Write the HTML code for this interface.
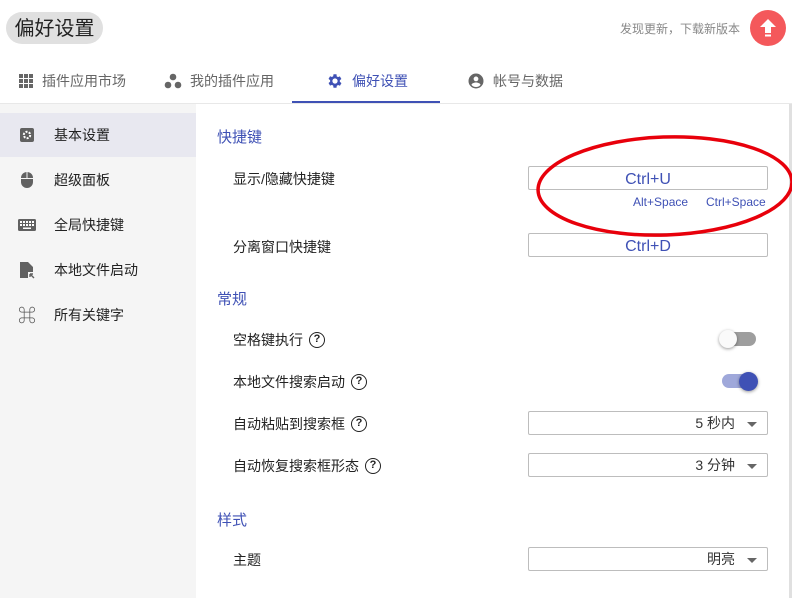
<!DOCTYPE html>
<html><head><meta charset="utf-8"><style>
*{margin:0;padding:0;box-sizing:border-box}
body{width:792px;height:598px;overflow:hidden;background:#fff;font-family:"Liberation Sans","Noto Sans CJK SC",sans-serif;position:relative;color:#212121}
.abs{position:absolute}
.pill{left:6px;top:12px;width:97px;height:32px;border-radius:16px;background:#e0e0e0;font-size:20px;line-height:34px;text-align:center;color:#222}
.tab{top:70px;font-size:14px;color:#666;line-height:22px;display:flex;align-items:center;gap:8px}
.side{left:0;top:104px;width:196px;height:494px;background:#f5f5f5}
.si{position:absolute;left:0;width:196px;height:44px;display:flex;align-items:center;font-size:14px;color:#222}
.si .ic{width:54px;display:flex;justify-content:center;color:#616161}
.h{left:217px;font-size:15px;color:#3f51b5}
.lab{left:233px;font-size:14px;color:#222;display:flex;align-items:center;gap:6px}
.q{width:16px;height:16px;border:1.4px solid #222;border-radius:50%;font-size:11px;line-height:13px;text-align:center;font-weight:bold}
.box{left:528px;width:240px;height:24px;border:1px solid #bdbdbd;border-radius:2px;background:#fff}
.inp{text-align:center;color:#3f51b5;font-size:16px;line-height:26px}
.sel{text-align:right;font-size:14px;line-height:23px;color:#333;padding-right:32px}
.sel:after{content:"";position:absolute;right:10px;top:10px;border-left:5px solid transparent;border-right:5px solid transparent;border-top:5px solid #666}
</style></head><body>
<div class="abs pill">偏好设置</div>
<div class="abs" style="right:52px;top:20px;font-size:12px;color:#888">发现更新，下载新版本</div>
<div class="abs" style="left:750px;top:10px;width:36px;height:36px;border-radius:50%;background:#f4585b">
<svg width="36" height="36" viewBox="0 0 36 36"><path d="M18 9l-8 8h5v6h6v-6h5z" fill="#fff"/><rect x="15" y="24.5" width="6" height="2" fill="#fff"/></svg></div>

<div class="abs tab" style="left:18px"><svg width="16" height="16" viewBox="0 0 16 16" fill="#666"><rect x="1" y="1" width="4" height="4"/><rect x="6" y="1" width="4" height="4"/><rect x="11" y="1" width="4" height="4"/><rect x="1" y="6" width="4" height="4"/><rect x="6" y="6" width="4" height="4"/><rect x="11" y="6" width="4" height="4"/><rect x="1" y="11" width="4" height="4"/><rect x="6" y="11" width="4" height="4"/><rect x="11" y="11" width="4" height="4"/></svg>插件应用市场</div>
<div class="abs tab" style="left:164px"><svg width="18" height="16" viewBox="0 0 18 16" fill="#666"><circle cx="9" cy="4" r="3.3"/><circle cx="4" cy="12" r="3.3"/><circle cx="14" cy="12" r="3.3"/></svg>我的插件应用</div>
<div class="abs tab" style="left:326px;color:#3f51b5"><svg width="18" height="18" viewBox="0 0 24 24" fill="#3f51b5"><path d="M19.4 13a7.5 7.5 0 000-2l2.1-1.6-2-3.5-2.5 1a7.3 7.3 0 00-1.7-1L15 3h-4l-.4 2.7a7.3 7.3 0 00-1.7 1l-2.5-1-2 3.5L6.5 11a7.5 7.5 0 000 2l-2.1 1.6 2 3.5 2.5-1a7.3 7.3 0 001.7 1L11 21h4l.4-2.7a7.3 7.3 0 001.7-1l2.5 1 2-3.5zM13 15.5a3.5 3.5 0 110-7 3.5 3.5 0 010 7z" transform="translate(-1 0)"/></svg>偏好设置</div>
<div class="abs tab" style="left:467px"><svg width="18" height="18" viewBox="0 0 24 24" fill="#666"><path d="M12 2a10 10 0 100 20 10 10 0 000-20zm0 4a3.2 3.2 0 110 6.4A3.2 3.2 0 0112 6zm0 14a7.8 7.8 0 01-6-2.9c.1-2 4-3.1 6-3.1s5.9 1.1 6 3.1a7.8 7.8 0 01-6 2.9z"/></svg>帐号与数据</div>
<div class="abs" style="left:0;top:103px;width:792px;height:1px;background:#e8e8e8"></div>
<div class="abs" style="left:292px;top:101px;width:148px;height:2px;background:#3f51b5"></div>

<div class="abs side">
<div class="si" style="top:9px;background:#e8e8f0"><span class="ic"><svg width="16" height="16" viewBox="0 0 16 16"><rect x="1" y="1" width="14" height="14" rx="2" fill="#616161"/><circle cx="8" cy="8" r="3.2" fill="none" stroke="#fff" stroke-width="2" stroke-dasharray="2 1.3"/><circle cx="8" cy="8" r="1.3" fill="#616161"/></svg></span>基本设置</div>
<div class="si" style="top:54px"><span class="ic"><svg width="14" height="18" viewBox="0 0 14 18" fill="#616161"><path d="M1 8h12v3a6 6 0 01-12 0z"/><path d="M1 7a6 6 0 015.5-6V7zM7.5 1A6 6 0 0113 7H7.5z"/></svg></span>超级面板</div>
<div class="si" style="top:99px"><span class="ic"><svg width="18" height="12" viewBox="0 0 18 12"><rect width="18" height="12" rx="1.5" fill="#616161"/><g fill="#fff"><rect x="2" y="2" width="2" height="2"/><rect x="5" y="2" width="2" height="2"/><rect x="8" y="2" width="2" height="2"/><rect x="11" y="2" width="2" height="2"/><rect x="14" y="2" width="2" height="2"/><rect x="2" y="5" width="2" height="2"/><rect x="5" y="5" width="2" height="2"/><rect x="8" y="5" width="2" height="2"/><rect x="11" y="5" width="2" height="2"/><rect x="14" y="5" width="2" height="2"/><rect x="5" y="8.5" width="8" height="1.5"/></g></svg></span>全局快捷键</div>
<div class="si" style="top:144px"><span class="ic"><svg width="16" height="18" viewBox="0 0 16 18" fill="#616161"><path d="M1 1h8l5 5v5h-5v6H1z"/><path d="M11 13l4 4M11 13v3M11 13h3" stroke="#616161" stroke-width="1.4" fill="none"/></svg></span>本地文件启动</div>
<div class="si" style="top:189px"><span class="ic" style="font-size:18px;color:#555">⌘</span>所有关键字</div>
</div>
<div class="abs" style="left:789px;top:104px;width:3px;height:494px;background:#e0e0e0"></div>

<div class="abs h" style="top:126px">快捷键</div>
<div class="abs lab" style="top:169px">显示/隐藏快捷键</div>
<div class="abs box inp" style="top:166px">Ctrl+U</div>
<div class="abs" style="left:633px;top:195px;font-size:12px;color:#3f51b5">Alt+Space</div>
<div class="abs" style="left:706px;top:195px;font-size:12px;color:#3f51b5">Ctrl+Space</div>
<div class="abs lab" style="top:237px">分离窗口快捷键</div>
<div class="abs box inp" style="top:233px">Ctrl+D</div>

<div class="abs h" style="top:288px">常规</div>
<div class="abs lab" style="top:330px">空格键执行 <span class="q">?</span></div>
<div class="abs" style="left:722px;top:332px;width:34px;height:14px;border-radius:7px;background:#9e9e9e"></div>
<div class="abs" style="left:719px;top:330px;width:18px;height:18px;border-radius:50%;background:#fafafa;box-shadow:0 1px 3px rgba(0,0,0,.4)"></div>
<div class="abs lab" style="top:372px">本地文件搜索启动 <span class="q">?</span></div>
<div class="abs" style="left:722px;top:374px;width:34px;height:14px;border-radius:7px;background:#9fa8da"></div>
<div class="abs" style="left:739px;top:372px;width:19px;height:19px;border-radius:50%;background:#3f51b5;box-shadow:0 1px 3px rgba(0,0,0,.4)"></div>
<div class="abs lab" style="top:414px">自动粘贴到搜索框 <span class="q">?</span></div>
<div class="abs box sel" style="top:411px">5 秒内</div>
<div class="abs lab" style="top:456px">自动恢复搜索框形态 <span class="q">?</span></div>
<div class="abs box sel" style="top:453px">3 分钟</div>

<div class="abs h" style="top:509px">样式</div>
<div class="abs lab" style="top:550px">主题</div>
<div class="abs box sel" style="top:547px">明亮</div>

<svg class="abs" style="left:0;top:0" width="792" height="598"><ellipse cx="665" cy="186" rx="127" ry="49" fill="none" stroke="#e8000b" stroke-width="3.5" transform="rotate(-2 665 186)"/></svg>
</body></html>
